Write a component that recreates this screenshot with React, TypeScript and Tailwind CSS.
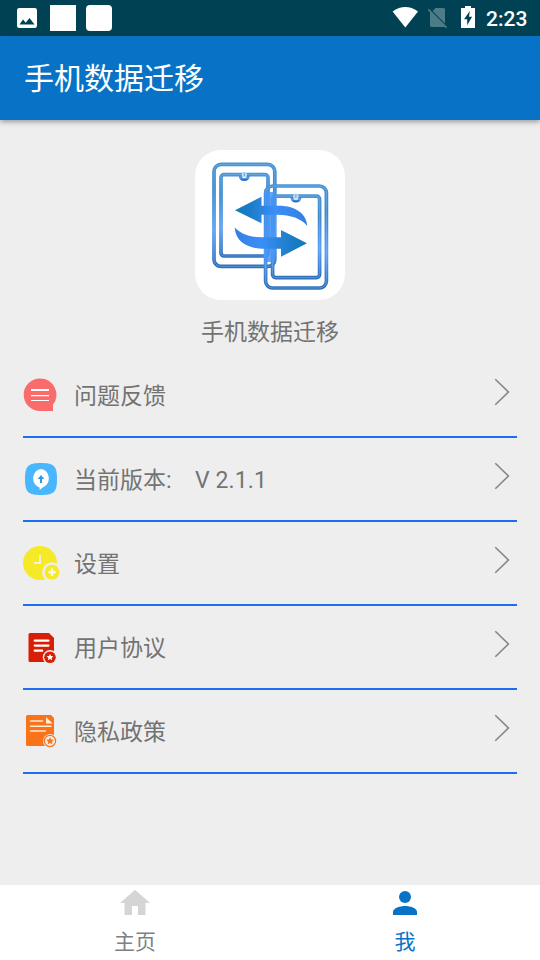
import React from "react";

const BG = "#eeeeee";

function StatusBar() {
  return (
    <div className="flex h-9 items-start bg-[#004254] text-white">
      <svg width="120" height="36" fill="#fff" className="shrink-0">
        <path
          fillRule="evenodd"
          d="M19.3 8H34.7Q37 8 37 10.3V25.7Q37 28 34.7 28H19.3Q17 28 17 25.7V10.3Q17 8 19.3 8ZM19.5 24.5H34.5L29.5 18L25.7 22.7L23 19.6Z"
        />
        <rect x="50" y="5" width="26" height="26" />
        <rect x="86" y="5" width="26" height="26" rx="4" />
      </svg>
      <div className="flex-1" />
      <svg width="96" height="36" className="shrink-0">
        <path d="M2.6 11.4Q15.3 2.6 28 11.4L15.3 27.4Z" fill="#fff" />
        <path d="M45.5 8H53.5Q55 8 55 9.5V23.4L42.6 10.9ZM40 11L55 26.3Q54.5 27 53.5 27H41.5Q40 27 40 25.5Z" fill="#4d7b87" />
        <path d="M38.3 9.3L56.5 27.7" stroke="#4d7b87" strokeWidth="1.7" />
        <path
          fillRule="evenodd"
          fill="#fff"
          d="M75 6H81V8H85V28H71V8H75ZM79.8 11L74 19.3H77.2V25.3L82.1 16.7H79Z"
        />
      </svg>
      <span className="w-[54px] pt-[7px] text-[21px] font-medium leading-[25px]">2:23</span>
    </div>
  );
}

function Phone({ x, y }: { x: number; y: number }) {
  return (
    <g transform={`translate(${x} ${y})`} fill="none">
      <g stroke="url(#frame)" strokeWidth="3.7">
        <rect x="19" y="14.4" width="60.8" height="102" rx="7" />
        <rect x="26" y="24.6" width="47" height="81.4" rx="3" />
        <path d="M45 24.6Q45.2 29.6 49.3 29.6Q53.4 29.6 53.6 24.6" strokeWidth="2.8" />
      </g>
      <g stroke="#a4cdf6" strokeOpacity=".35" strokeWidth="1">
        <rect x="19" y="14.4" width="60.8" height="102" rx="7" />
        <rect x="26" y="24.6" width="47" height="81.4" rx="3" />
      </g>
      <circle cx="49.3" cy="24.6" r="2.7" fill="#c3dcf3" />
      <path d="M49.3 22.8V26.2" stroke="#5a9bd6" strokeWidth="1" />
    </g>
  );
}

function Logo() {
  return (
    <svg width="150" height="150" viewBox="0 0 150 150" className="rounded-[26px] bg-white">
      <defs>
        <linearGradient id="frame" x1="0" y1="0" x2="0" y2="1">
          <stop offset="0" stopColor="#4794d4" />
          <stop offset="0.25" stopColor="#3c88cc" />
          <stop offset="0.65" stopColor="#5a9ff6" />
          <stop offset="1" stopColor="#2f70ba" />
        </linearGradient>
        <linearGradient id="left" gradientUnits="userSpaceOnUse" x1="40" y1="0" x2="112" y2="0">
          <stop offset="0" stopColor="#127abd" />
          <stop offset="0.2" stopColor="#1a7cc6" />
          <stop offset="0.55" stopColor="#3b8ff8" />
          <stop offset="1" stopColor="#347fe0" />
        </linearGradient>
        <linearGradient id="right" gradientUnits="userSpaceOnUse" x1="40" y1="0" x2="112" y2="0">
          <stop offset="0" stopColor="#347fe0" />
          <stop offset="0.35" stopColor="#3b8ff8" />
          <stop offset="0.8" stopColor="#1a7cc6" />
          <stop offset="1" stopColor="#127abd" />
        </linearGradient>
      </defs>
      <g className="blur-[0.7px]">
        <Phone x={0} y={0} />
        <Phone x={51.6} y={21.6} />
        <path d="M69.5 42H80.5V112H69.5Z" fill="#4594f7" opacity=".85" />
        <path
          d="M40 60.3L66.5 46.7V55.7H84C101 55.7 111.5 64 112.3 76C106 68.5 96 65 82 64.8H66.5V73.3Z"
          fill="url(#left)"
        />
        <path
          d="M112 93.2L86 80V87.3H67C57 87.3 47 85 39.6 77.5C41 92 52 98.7 70 98.7H86V106.8Z"
          fill="url(#right)"
        />
      </g>
    </svg>
  );
}

const STAR = "M0 -3.4L1 -1.2L3.4 -1L1.6 .6L2.1 3L0 1.7L-2.1 3L-1.6 .6L-3.4 -1L-1 -1.2Z";

const feedbackIcon = (
  <>
    <path d="M17 3.4A16.3 16.3 0 0 1 30 29.6V36H17A16.3 16.3 0 0 1 17 3.4Z" fill="#fa6b6b" />
    <path d="M8 14H26V16H8ZM8 20H26V21.2H8ZM8 25H26V26.1H8Z" fill="#fff" />
  </>
);
const versionIcon = (
  <>
    <path d="M18 4C31 4 34 7 34 20S31 36 18 36S2 33 2 20S5 4 18 4Z" fill="#49b6fe" />
    <path d="M18 10A8 9.3 0 0 1 19.5 28.4L16.8 31L16.5 28.4A8 9.3 0 0 1 18 10Z" fill="#fff" />
    <path d="M18 16L21.3 20H19V24H17V20H14.7Z" fill="#3498dc" />
  </>
);
const settingsIcon = (
  <>
    <circle cx="17" cy="20" r="17" fill="#f5e928" />
    <path d="M11 20H17V12" fill="none" stroke="#f3f3df" strokeWidth="1.9" />
    <circle cx="29" cy="29.2" r="9.9" fill={BG} />
    <circle cx="29" cy="29.2" r="7.4" fill="#f5e928" />
    <path d="M25.3 29.2H32.7M29 25.5V32.9" stroke="#f8f8ee" strokeWidth="2.4" />
  </>
);
const agreementIcon = (
  <>
    <path d="M7 6H26L31 11V35H7Q5.5 35 5.5 33.5V7.5Q5.5 6 7 6Z" fill="#d81e06" />
    <path d="M11.7 13.6H25.5M11.7 18.6H25.5M11.7 23.7H19.2" stroke="#fff" strokeWidth="2.2" strokeLinecap="round" />
    <circle cx="27" cy="30.3" r="7.2" fill={BG} />
    <circle cx="27" cy="30.3" r="5.8" fill="#d81e06" />
    <path d={STAR} transform="translate(27 30.3)" fill="#fff" />
  </>
);
const privacyIcon = (
  <>
    <path d="M4.5 4H23L31 12.5V35H4.5Q3 35 3 33.5V5.5Q3 4 4.5 4Z" fill="#fb7319" />
    <path d="M22.5 4H28L31 7V13L22.5 4.8Z" fill="#fb7319" />
    <path d="M23 6V12.5H29.5Z" fill="#fff1e5" />
    <path d="M7.5 10H19.5M7.5 15.2H28M7.5 20.1H22.3" stroke="#ffe9d8" strokeWidth="1.5" strokeLinecap="round" />
    <circle cx="27" cy="30" r="6.9" fill={BG} />
    <circle cx="27" cy="30" r="5.6" fill="none" stroke="#fb7319" strokeWidth="1.2" />
    <path d={STAR} transform="translate(27 30) scale(1.15)" fill="#fb7319" />
  </>
);

const rows = [
  { label: "问题反馈", icon: feedbackIcon },
  { label: "当前版本:", value: "V 2.1.1", icon: versionIcon },
  { label: "设置", icon: settingsIcon },
  { label: "用户协议", icon: agreementIcon },
  { label: "隐私政策", icon: privacyIcon },
];

function Row({ label, value, icon }: { label: string; value?: string; icon: React.ReactNode }) {
  return (
    <li className="flex h-[84px] items-center border-b-2 border-[#1e6df0]">
      <svg width="37" height="40" className="shrink-0">{icon}</svg>
      <span className="ml-3.5 w-[121px] whitespace-nowrap pt-1">{label}</span>
      <span className="flex-1 pt-1 tracking-[0.1px]">{value}</span>
      <svg width="17" height="28" className="mr-1.5 mb-1.5" fill="none" stroke="#858585" strokeWidth="1.6">
        <path d="M1.3 1.2L14.4 14L1.3 26.8" />
      </svg>
    </li>
  );
}

export default function App() {
  return (
    <div className="flex h-[960px] w-[540px] flex-col overflow-hidden bg-[#eeeeee] font-[Roboto,'Noto_Sans_CJK_SC',sans-serif] text-[#737373]">
      <StatusBar />
      <header className="flex h-[84px] shrink-0 items-center bg-[#0873c6] pl-6 text-[30px] text-white shadow-[0_2px_5px_rgba(0,0,0,0.35)]">
        手机数据迁移
      </header>
      <main className="flex flex-1 flex-col items-center pt-[30px]">
        <Logo />
        <p className="h-[54px] pt-4 text-[23px] leading-[34px]">手机数据迁移</p>
        <ul className="w-full px-[23px] text-[23px] leading-[34px]">
          {rows.map((r) => <Row key={r.label} {...r} />)}
        </ul>
      </main>
      <nav className="grid h-[75px] shrink-0 grid-cols-2 bg-white text-[21px] leading-[30px]">
        <div className="flex flex-col items-center text-[#808080]">
          <svg width="30" height="36" fill="#d5d5d5">
            <path d="M15 4.7L30 18H25.5V30H18V21H12V30H4.5V18H0Z" />
          </svg>
          <span className="mt-1.5">主页</span>
        </div>
        <div className="flex flex-col items-center text-[#0873c6]">
          <svg width="30" height="36" fill="#0873c6">
            <circle cx="15" cy="12" r="6" />
            <path d="M3 30V27C3 23 10 21 15 21S27 23 27 27V30Z" />
          </svg>
          <span className="mt-1.5">我</span>
        </div>
      </nav>
    </div>
  );
}
